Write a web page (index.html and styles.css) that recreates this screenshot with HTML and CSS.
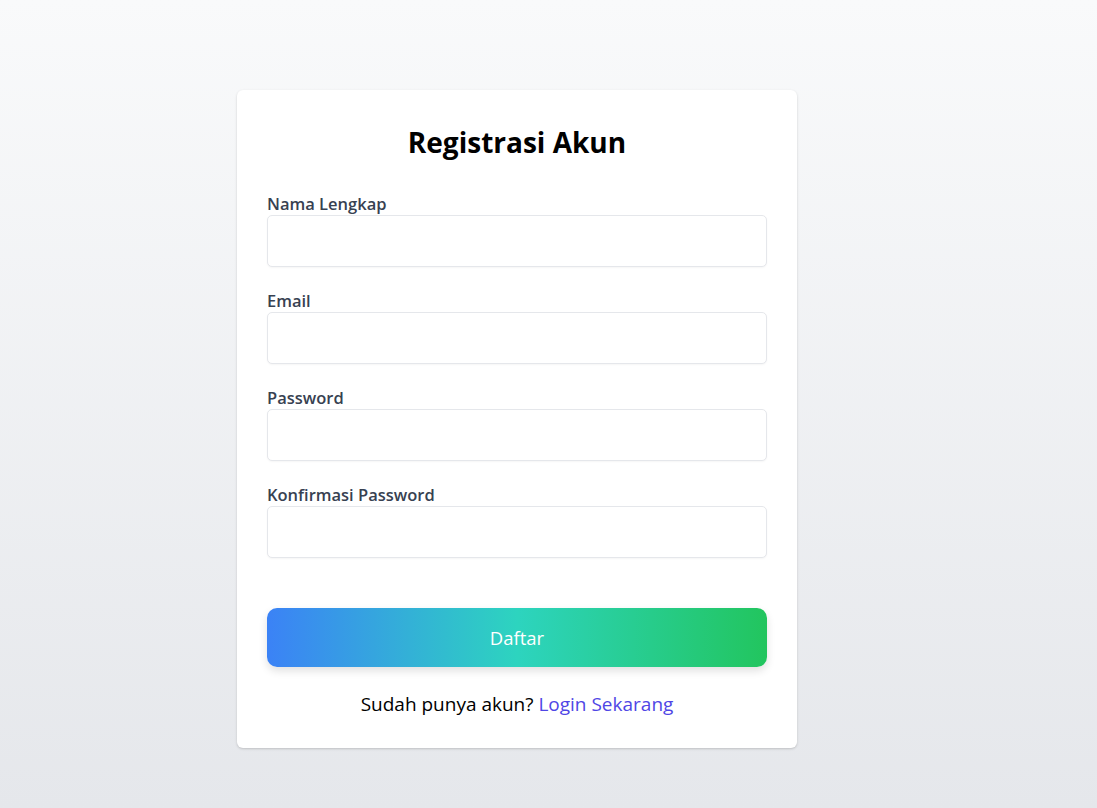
FILE: index.html
```html
<!DOCTYPE html>
<html lang="id">
<head>
<meta charset="utf-8">
<title>Registrasi Akun</title>
<link rel="stylesheet" href="styles.css">
</head>
<body>
<main class="page">
  <section class="card">
    <h1 class="title">Registrasi Akun</h1>
    <form class="form">
      <div class="field">
        <label class="label">Nama Lengkap</label>
        <input class="input" type="text">
      </div>
      <div class="field">
        <label class="label">Email</label>
        <input class="input" type="email">
      </div>
      <div class="field">
        <label class="label">Password</label>
        <input class="input" type="password">
      </div>
      <div class="field">
        <label class="label">Konfirmasi Password</label>
        <input class="input" type="password">
      </div>
      <button class="btn" type="button">Daftar</button>
    </form>
    <p class="foot">Sudah punya akun? <a class="link" href="#">Login Sekarang</a></p>
  </section>
</main>
</body>
</html>
```

FILE: styles.css
```css
* { box-sizing: border-box; }
html, body { margin: 0; height: 100%; }
body {
  font-family: "Open Sans", "Noto Sans", "Liberation Sans", sans-serif;
  background: linear-gradient(180deg, #f9fafb 0%, #e5e7eb 100%);
  min-height: 808px;
}
.page {
  padding: 90px 0 0 237px;
}
.card {
  width: 560px;
  background: #fff;
  border-radius: 6px;
  box-shadow: 0 1px 3px rgba(0,0,0,0.12), 0 1px 2px rgba(0,0,0,0.06);
  padding: 30px 30px 31px;
}
.title {
  margin: 0 0 28px;
  text-align: center;
  font-size: 28px;
  font-weight: 700;
  line-height: 44px;
  color: #000;
}
.form { display: flex; flex-direction: column; }
.field { display: flex; flex-direction: column; margin-bottom: 22px; }
.label {
  font-size: 16.5px;
  font-weight: 600;
  color: #374151;
  line-height: 23px;
}
.input {
  height: 52px;
  border: 1px solid #e5e7eb;
  border-radius: 5px;
  background: #fff;
  box-shadow: 0 1px 2px rgba(0,0,0,0.04);
  font: inherit;
}
.btn {
  margin-top: 28px;
  height: 59px;
  border: none;
  border-radius: 10px;
  background: linear-gradient(90deg, #3b82f6 0%, #2dd4bf 50%, #22c55e 100%);
  color: #fff;
  font-family: inherit;
  font-size: 18.5px;
  box-shadow: 0 4px 8px rgba(0,0,0,0.12);
}
.foot {
  margin: 24px 0 0;
  text-align: center;
  font-size: 19px;
  line-height: 26px;
  color: #000;
}
.link { color: #4f46e5; text-decoration: none; }
```
